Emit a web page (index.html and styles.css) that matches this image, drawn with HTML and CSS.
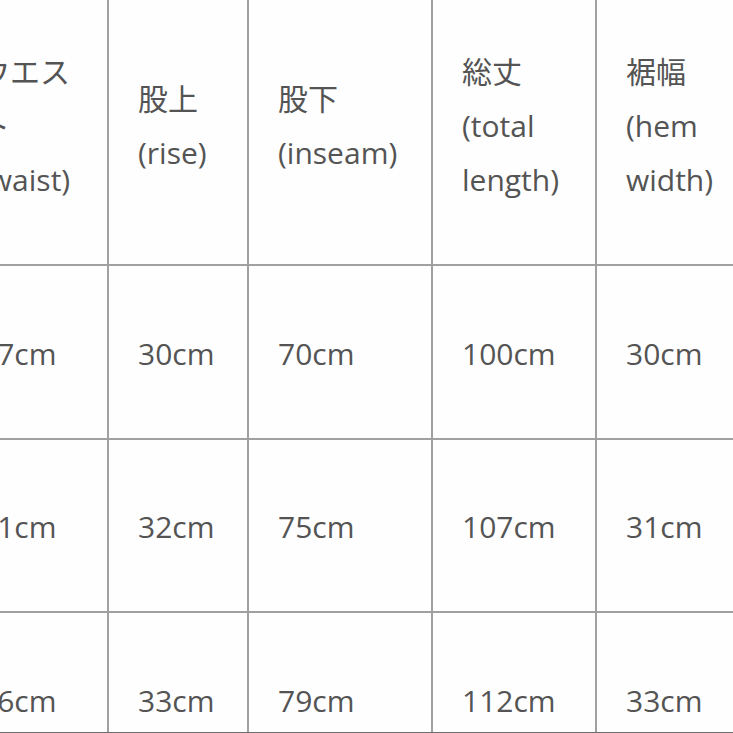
FILE: index.html
```html
<!DOCTYPE html>
<html lang="ja">
<head>
<meta charset="utf-8">
<title>サイズ表</title>
<link rel="stylesheet" href="styles.css">
</head>
<body>
<div class="frame">
  <div class="sheet">
    <div class="cell head">ウエス<br>ト<br>(waist)</div>
    <div class="cell head">股上<br>(rise)</div>
    <div class="cell head">股下<br>(inseam)</div>
    <div class="cell head">総丈<br>(total<br>length)</div>
    <div class="cell head">裾幅<br>(hem<br>width)</div>

    <div class="cell value">67cm</div>
    <div class="cell value">30cm</div>
    <div class="cell value">70cm</div>
    <div class="cell value">100cm</div>
    <div class="cell value">30cm</div>

    <div class="cell value">71cm</div>
    <div class="cell value">32cm</div>
    <div class="cell value">75cm</div>
    <div class="cell value">107cm</div>
    <div class="cell value">31cm</div>

    <div class="cell value">76cm</div>
    <div class="cell value">33cm</div>
    <div class="cell value">79cm</div>
    <div class="cell value">112cm</div>
    <div class="cell value">33cm</div>
  </div>
</div>
</body>
</html>
```

FILE: styles.css
```css
html, body {
  margin: 0;
  padding: 0;
  background: #ffffff;
}

.frame {
  width: 733px;
  height: 733px;
  overflow: hidden;
  box-sizing: border-box;
  border-bottom: 1px solid #6e6e6e;
  background: #fefefe;
}

.sheet {
  display: grid;
  grid-template-columns: 158px 140px 184px 164px 200px;
  grid-template-rows: 276px 173.5px 173.5px 173.5px;
  margin-left: -49px;
  margin-top: -10px;
  width: 846px;
  font-family: "Open Sans", "Noto Sans CJK JP", sans-serif;
  font-size: 30px;
  color: #545454;
}

.cell {
  box-sizing: border-box;
  border-right: 2px solid #a0a0a0;
  border-bottom: 2px solid #a0a0a0;
  padding-left: 29px;
  display: flex;
  align-items: center;
  line-height: 54px;
  white-space: nowrap;
}

.head {
  padding-bottom: 2px;
}

.value {
  padding-top: 4px;
}
```
